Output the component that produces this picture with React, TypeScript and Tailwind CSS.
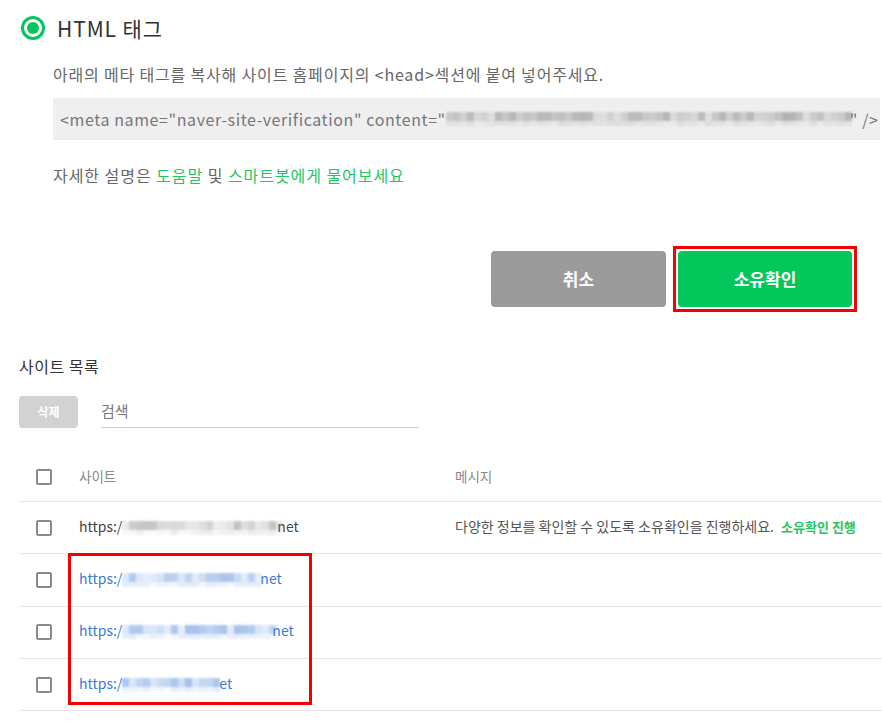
import React from 'react'

const FONT = { fontFamily: '"Noto Sans CJK KR", "Noto Sans", sans-serif' }

// pseudo-random shades for the pixelated (blurred) parts
function shade(seed: number, i: number) {
  const x = Math.sin(seed * 97 + i * 13.7) * 10000
  return x - Math.floor(x)
}

function Mosaic({ width, seed, rgb }: { width: number; seed: number; rgb: string }) {
  const cols = Math.ceil(width / 7)
  return (
    <span className="inline-flex flex-col justify-center align-middle blur-[1px]" style={{ width }}>
      <span className="flex h-[9px]">
        {Array.from({ length: cols }).map((_, i) => (
          <span
            key={i}
            className="h-full w-[7px] shrink-0"
            style={{ backgroundColor: `rgba(${rgb},${0.12 + shade(seed, i) * 0.35})` }}
          />
        ))}
      </span>
      <span className="flex h-[5px]">
        {Array.from({ length: cols }).map((_, i) => (
          <span
            key={i}
            className="h-full w-[7px] shrink-0"
            style={{ backgroundColor: `rgba(${rgb},${0.03 + shade(seed + 5, i) * 0.12})` }}
          />
        ))}
      </span>
    </span>
  )
}

function Checkbox() {
  return <span className="block h-4 w-4 rounded-[2px] border-2 border-[#8a8a8a] bg-white" />
}

const rows = [
  { blur: 155, tail: 'net', link: false, seed: 1 },
  { blur: 138, tail: 'net', link: true, seed: 2 },
  { blur: 150, tail: 'net', link: true, seed: 3 },
  { blur: 97, tail: 'et', link: true, seed: 4 },
]

export default function App() {
  return (
    <div className="relative h-[721px] w-[882px] overflow-hidden bg-white" style={FONT}>
      {/* verification method */}
      <div className="pl-[21px] pt-[16px]">
        <div className="flex items-center gap-3">
          <span className="flex h-6 w-6 items-center justify-center rounded-full border-[3px] border-[#03c75a]">
            <span className="h-3 w-3 rounded-full bg-[#03c75a]" />
          </span>
          <span className="text-[21px] leading-6 tracking-[0.9px] text-[#333]">HTML 태그</span>
        </div>
      </div>

      <div className="pl-[53px]">
        <p className="mt-[22px] whitespace-nowrap text-[16px] leading-6 tracking-[0.82px] text-[#666]">
          아래의 메타 태그를 복사해 사이트 홈페이지의 &lt;head&gt;섹션에 붙여 넣어주세요.
        </p>
        <div className="mt-[12px] flex h-[42px] w-[827px] items-center whitespace-nowrap bg-[#efefef] pl-[7px] text-[16px] tracking-[0.6px] text-[#777]">
          &lt;meta name="naver-site-verification" content="
          <Mosaic width={404} seed={9} rgb="110,110,110" />
          " /&gt;
        </div>
        <p className="mt-[23px] text-[16px] leading-6 tracking-[0.95px] text-[#666]">
          자세한 설명은 <span className="text-[#1ec661]">도움말</span> 및{' '}
          <span className="text-[#1ec661]">스마트봇에게 물어보세요</span>
        </p>
      </div>

      {/* actions */}
      <div className="mt-[59px] flex items-center pl-[491px]">
        <button className="h-[56px] w-[175px] rounded-[4px] bg-[#9b9b9b] text-[17px] font-bold text-white">
          취소
        </button>
        <div className="ml-[7px] border-[3px] border-[#f40000] p-[2px]">
          <button className="block h-[56px] w-[174px] rounded-[4px] bg-[#03c75a] text-[17px] font-bold text-white">
            소유확인
          </button>
        </div>
      </div>

      {/* site list */}
      <div className="pl-[19px]">
        <h3 className="mt-[42px] text-[16px] leading-6 tracking-[0.5px] text-[#333]">사이트 목록</h3>
        <div className="mt-[18px] flex items-end">
          <button className="h-[32px] w-[59px] rounded-[4px] bg-[#d2d2d2] text-[12px] font-bold text-white">
            삭제
          </button>
          <div className="ml-[23px] w-[318px] border-b border-[#cfcfcf] pb-[6px] text-[15px] leading-5 text-[#777]">
            검색
          </div>
        </div>

        <div className="mt-[24px]">
          <div className="grid h-[50px] grid-cols-[60px_376px_1fr] items-center border-b border-[#e6e6e6] text-[13.5px] text-[#888]">
            <span className="pl-[17px]">
              <Checkbox />
            </span>
            <span>사이트</span>
            <span>메시지</span>
          </div>
          {rows.map((r, i) => (
            <div
              key={i}
              className="grid h-[52.3px] grid-cols-[60px_376px_1fr] items-center whitespace-nowrap border-b border-[#e6e6e6] pb-[3px] text-[14px]"
            >
              <span className="pl-[17px] pt-[3px]">
                <Checkbox />
              </span>
              <span className={r.link ? 'text-[#3e7ad6]' : 'text-[#444]'}>
                https:/
                <Mosaic width={r.blur} seed={r.seed} rgb={r.link ? '62,122,214' : '120,120,120'} />
                {r.tail}
              </span>
              <span className="text-[#555]">
                {i === 0 && (
                  <>
                    다양한 정보를 확인할 수 있도록 소유확인을 진행하세요.{' '}
                    <span className="ml-1 text-[13px] font-bold text-[#1ec661]">소유확인 진행</span>
                  </>
                )}
              </span>
            </div>
          ))}
        </div>
      </div>

      {/* highlight box over the unverified rows */}
      <div className="pointer-events-none absolute left-[68px] top-[553px] h-[152px] w-[244px] border-[3px] border-[#f40000]" />
    </div>
  )
}
